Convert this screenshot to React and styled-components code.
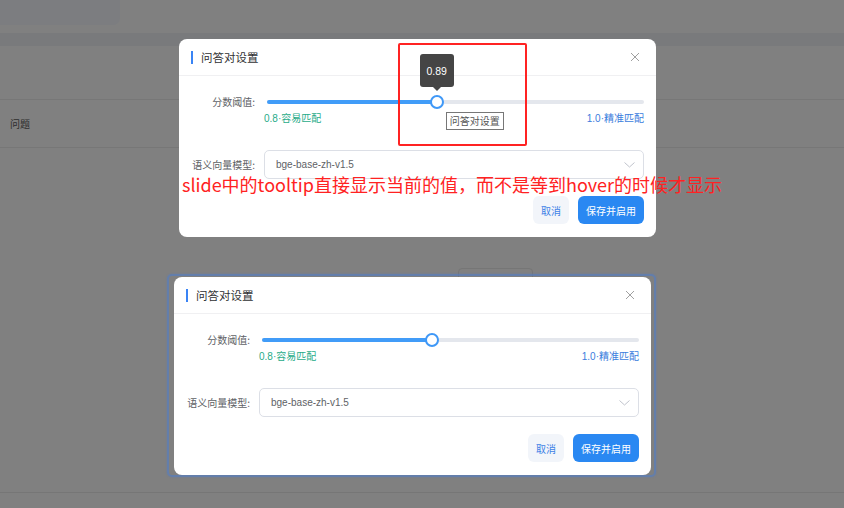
import React from "react";
import styled, { createGlobalStyle } from "styled-components";

const Global = createGlobalStyle`
  html, body { margin: 0; padding: 0; }
  body {
    font-family: "Liberation Sans", "Noto Sans CJK SC", sans-serif;
    background: #808080;
    -webkit-font-smoothing: antialiased;
  }
  #root { width: 844px; height: 508px; }
`;

const Page = styled.div`
  position: relative;
  width: 844px;
  height: 508px;
  overflow: hidden;
  background: #808080;
  display: flex;
  flex-direction: column;
`;

const TopBox = styled.div`
  width: 120px;
  height: 25px;
  background: #7c7d80;
  border-radius: 0 0 7px 0;
`;

const Band = styled.div`
  margin-top: 8px;
  height: 13px;
  background: #797a7c;
`;

const TableHead = styled.div`
  margin-top: 53px;
  height: 47px;
  border-top: 1px solid #777777;
  border-bottom: 1px solid #777777;
  display: flex;
  align-items: center;
  padding-left: 10px;
  font-family: "Noto Sans CJK SC", sans-serif;
  font-size: 10px;
  color: #2e2e2e;
`;

const GhostButton = styled.div`
  margin-top: 120px;
  margin-left: 458px;
  width: 75px;
  height: 20px;
  border: 1px solid #767676;
  border-radius: 4px;
  box-sizing: border-box;
`;

const BottomLine = styled.div`
  margin-top: auto;
  height: 15px;
  border-top: 1px solid #767676;
`;

/* ---------- modal ---------- */

const ModalBox = styled.div`
  width: 477px;
  height: 198px;
  box-sizing: border-box;
  background: #ffffff;
  border-radius: 8px;
  display: flex;
  flex-direction: column;
`;

const Header = styled.div`
  height: 36px;
  flex: none;
  border-bottom: 1px solid #f0f0f2;
  display: flex;
  align-items: center;
  padding: 0 12px;
  gap: 8px;
`;

const TitleBar = styled.span`
  width: 2px;
  height: 13px;
  background: #3a84f5;
`;

const Title = styled.span`
  flex: 1;
  font-family: "Noto Sans CJK SC", sans-serif;
  font-size: 11.5px;
  color: #303133;
`;

const CloseBtn = styled.span`
  display: flex;
  width: 10px;
  height: 10px;
  margin-right: 4px;
`;

const Body = styled.div`
  padding: 19px 12px 0;
  display: grid;
  grid-template-columns: 64px 1fr;
  column-gap: 9px;
  align-items: start;
`;

const Label = styled.div`
  text-align: right;
  font-family: "Noto Sans CJK SC", sans-serif;
  font-size: 10px;
  color: #606266;
  line-height: ${(p) => p.$lh}px;
  margin-top: ${(p) => p.$mt || 0}px;
  white-space: nowrap;
`;

const SliderCol = styled.div`
  display: flex;
  flex-direction: column;
`;

const SliderTrackArea = styled.div`
  position: relative;
  height: 14px;
  margin-left: 3px;
  display: flex;
  align-items: center;
`;

const Track = styled.div`
  position: relative;
  width: 100%;
  height: 4px;
  border-radius: 2px;
  background: #e4e7ed;
`;

const Fill = styled.div`
  height: 100%;
  border-radius: 2px;
  background: #419cf8;
`;

const Thumb = styled.div`
  position: absolute;
  top: 0;
  width: 14px;
  height: 14px;
  margin-left: -7px;
  box-sizing: border-box;
  border-radius: 50%;
  border: 2px solid #3f98f7;
  background: #ffffff;
`;

const ValueTip = styled.div`
  position: absolute;
  bottom: 20px;
  left: 50%;
  transform: translateX(-50%);
  width: 34px;
  height: 33px;
  background: #454545;
  border-radius: 3px;
  color: #ffffff;
  font-size: 10.5px;
  display: flex;
  align-items: center;
  justify-content: center;
  z-index: 2;
  &::after {
    content: "";
    position: absolute;
    left: 50%;
    bottom: -4px;
    margin-left: -4px;
    border-left: 4px solid transparent;
    border-right: 4px solid transparent;
    border-top: 4px solid #454545;
  }
`;

const NativeTip = styled.div`
  position: absolute;
  left: 14px;
  top: 15px;
  height: 18px;
  padding: 0 3px;
  box-sizing: border-box;
  border: 1px solid #777777;
  background: #ffffff;
  font-family: "Noto Sans CJK SC", sans-serif;
  font-size: 10px;
  line-height: 16px;
  color: #555555;
  white-space: nowrap;
  z-index: 2;
`;

const Marks = styled.div`
  margin-top: 3px;
  height: 14px;
  display: flex;
  justify-content: space-between;
  font-family: "Liberation Sans", "Noto Sans CJK SC", sans-serif;
  font-size: 10px;
  line-height: 14px;
`;

const Mark = styled.span`
  color: ${(p) => p.$color};
`;

const Select = styled.div`
  margin-top: ${(p) => p.$mt}px;
  height: 29px;
  box-sizing: border-box;
  border: 1px solid #dcdfe6;
  border-radius: 5px;
  display: flex;
  align-items: center;
  justify-content: space-between;
  padding: 0 8px 0 11px;
  font-size: 10px;
  color: #606266;
`;

const Footer = styled.div`
  margin-top: 17px;
  padding: 0 12px;
  display: flex;
  justify-content: flex-end;
  gap: 9px;
`;

const Button = styled.button`
  height: 28px;
  border: none;
  border-radius: 6px;
  padding: 0 8px;
  font-family: "Noto Sans CJK SC", sans-serif;
  font-size: 10px;
  background: ${(p) => (p.$primary ? "#2a88f2" : "#f2f5fa")};
  color: ${(p) => (p.$primary ? "#ffffff" : "#3c7fe6")};
`;

/* ---------- overlays ---------- */

const Layer = styled.div`
  position: absolute;
  left: ${(p) => p.$x}px;
  top: ${(p) => p.$y}px;
  z-index: ${(p) => p.$z || 1};
`;

const Frame = styled.div`
  border: 2px solid rgba(80, 125, 200, 0.6);
  box-shadow: 0 0 2px rgba(70, 120, 210, 0.45);
  border-radius: 5px;
  padding: 1px 3px 0 5px;
`;

const RedBox = styled.div`
  width: 129px;
  height: 103px;
  box-sizing: border-box;
  border: 2px solid #ff2323;
  border-radius: 2px;
`;

const Note = styled.div`
  font-family: "Noto Sans CJK SC", sans-serif;
  font-size: 18px;
  line-height: 24px;
  color: #ff2222;
  white-space: nowrap;
`;

const CloseIcon = () => (
  <svg width="10" height="10" viewBox="0 0 10 10">
    <path d="M1 1L9 9M9 1L1 9" stroke="#a0a0a0" strokeWidth="1" fill="none" />
  </svg>
);

const Chevron = () => (
  <svg width="11" height="6" viewBox="0 0 11 6">
    <path d="M0.5 0.5L5.5 5L10.5 0.5" stroke="#c0c4cc" strokeWidth="1" fill="none" />
  </svg>
);

function Modal({ value, showTip }) {
  const pct = ((value - 0.8) / 0.2) * 100;
  return (
    <ModalBox>
      <Header>
        <TitleBar />
        <Title>问答对设置</Title>
        <CloseBtn>
          <CloseIcon />
        </CloseBtn>
      </Header>
      <Body>
        <Label $lh={14}>分数阈值:</Label>
        <SliderCol>
          <SliderTrackArea>
            <Track>
              <Fill style={{ width: `${pct}%` }} />
            </Track>
            <Thumb style={{ left: `${pct}%` }}>
              {showTip && <ValueTip>{value.toFixed(2)}</ValueTip>}
              {showTip && <NativeTip>问答对设置</NativeTip>}
            </Thumb>
          </SliderTrackArea>
          <Marks>
            <Mark $color="#1fab89">0.8·容易匹配</Mark>
            <Mark $color="#3b7ddd">1.0·精准匹配</Mark>
          </Marks>
        </SliderCol>
        <Label $lh={29} $mt={24}>语义向量模型:</Label>
        <Select $mt={24}>
          <span>bge-base-zh-v1.5</span>
          <Chevron />
        </Select>
      </Body>
      <Footer>
        <Button>取消</Button>
        <Button $primary>保存并启用</Button>
      </Footer>
    </ModalBox>
  );
}

export default function App() {
  return (
    <>
      <Global />
      <Page>
        <TopBox />
        <Band />
        <TableHead>问题</TableHead>
        <GhostButton />
        <BottomLine />

        <Layer $x={179} $y={39}>
          <Modal value={0.89} showTip />
        </Layer>

        <Layer $x={398} $y={43} $z={3}>
          <RedBox />
        </Layer>

        <Layer $x={182} $y={172} $z={3}>
          <Note>slide中的tooltip直接显示当前的值，而不是等到hover的时候才显示</Note>
        </Layer>

        <Layer $x={167} $y={274}>
          <Frame>
            <Modal value={0.89} />
          </Frame>
        </Layer>
      </Page>
    </>
  );
}
